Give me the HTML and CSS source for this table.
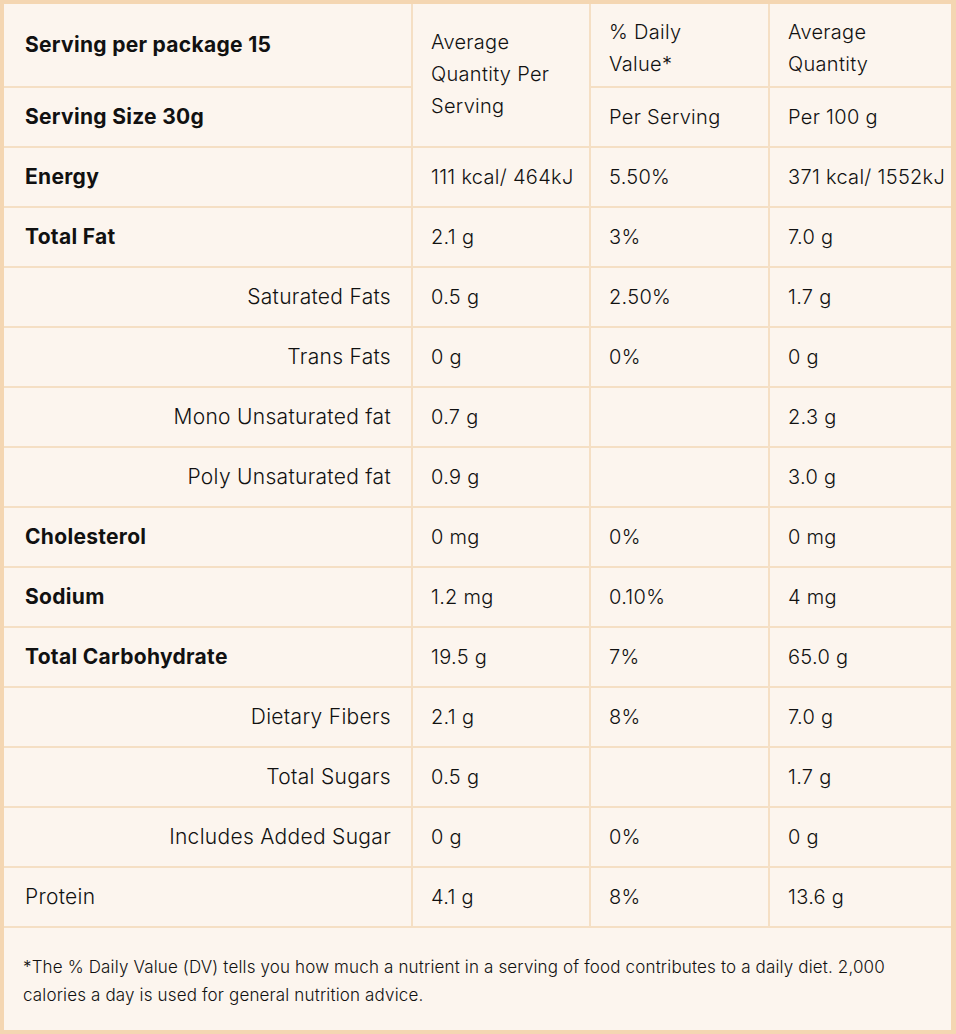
FILE: index.html
```html
<!DOCTYPE html>
<html>
<head>
<meta charset="utf-8">
<link rel="stylesheet" href="styles.css">
</head>
<body>
<div class="panel">
  <div class="grid">
    <div class="c lbl b">Serving per package 15</div>
    <div class="c span2">Average<br>Quantity Per<br>Serving</div>
    <div class="c h2">% Daily<br>Value*</div>
    <div class="c h2">Average<br>Quantity</div>
    <div class="c lbl b">Serving Size 30g</div>
    <div class="c">Per Serving</div>
    <div class="c">Per 100 g</div>

    <div class="c lbl b">Energy</div><div class="c">111 kcal/ 464kJ</div><div class="c">5.50%</div><div class="c">371 kcal/ 1552kJ</div>
    <div class="c lbl b">Total Fat</div><div class="c">2.1 g</div><div class="c">3%</div><div class="c">7.0 g</div>
    <div class="c lbl sub">Saturated Fats</div><div class="c">0.5 g</div><div class="c">2.50%</div><div class="c">1.7 g</div>
    <div class="c lbl sub">Trans Fats</div><div class="c">0 g</div><div class="c">0%</div><div class="c">0 g</div>
    <div class="c lbl sub">Mono Unsaturated fat</div><div class="c">0.7 g</div><div class="c"></div><div class="c">2.3 g</div>
    <div class="c lbl sub">Poly Unsaturated fat</div><div class="c">0.9 g</div><div class="c"></div><div class="c">3.0 g</div>
    <div class="c lbl b">Cholesterol</div><div class="c">0 mg</div><div class="c">0%</div><div class="c">0 mg</div>
    <div class="c lbl b">Sodium</div><div class="c">1.2 mg</div><div class="c">0.10%</div><div class="c">4 mg</div>
    <div class="c lbl b">Total Carbohydrate</div><div class="c">19.5 g</div><div class="c">7%</div><div class="c">65.0 g</div>
    <div class="c lbl sub">Dietary Fibers</div><div class="c">2.1 g</div><div class="c">8%</div><div class="c">7.0 g</div>
    <div class="c lbl sub">Total Sugars</div><div class="c">0.5 g</div><div class="c"></div><div class="c">1.7 g</div>
    <div class="c lbl sub">Includes Added Sugar</div><div class="c">0 g</div><div class="c">0%</div><div class="c">0 g</div>
    <div class="c lbl">Protein</div><div class="c">4.1 g</div><div class="c">8%</div><div class="c">13.6 g</div>

    <div class="c note">*The % Daily Value (DV) tells you how much a nutrient in a serving of food contributes to a daily diet. 2,000<br>calories a day is used for general nutrition advice.</div>
  </div>
</div>
</body>
</html>
```

FILE: styles.css
```css
html, body {
  margin: 0;
  padding: 0;
  background: #fcf5ee;
}
.panel {
  width: 956px;
  height: 1034px;
  box-sizing: border-box;
  border-style: solid;
  border-color: #f4d6b2;
  border-width: 4px 5px 4px 4px;
  background: #f5dfc4;
}
.grid {
  display: grid;
  grid-template-columns: 407px 176px 177px 181px;
  grid-template-rows: 82px 58px repeat(13, 58px) 102px;
  column-gap: 2px;
  row-gap: 2px;
  height: 100%;
}
.c {
  background: #fcf5ee;
  font-family: Inter, "Noto Sans", sans-serif;
  font-size: 20px;
  font-weight: 300;
  line-height: 32px;
  color: #111111;
  letter-spacing: 0.3px;
  white-space: nowrap;
  display: flex;
  align-items: center;
  padding: 0 0 0 18px;
  box-sizing: border-box;
}
.lbl {
  padding-left: 21px;
  font-size: 21px;
  letter-spacing: 0.3px;
}
.b { font-weight: 700; }
.sub { justify-content: flex-end; padding-right: 20px; }
.span2 { grid-row: span 2; padding-bottom: 3px; }
.h2 { padding-top: 6px; }
.note {
  grid-column: 1 / -1;
  font-size: 17px;
  line-height: 28px;
  padding: 4px 20px 0 19px;
  letter-spacing: 0.15px;
}
```
